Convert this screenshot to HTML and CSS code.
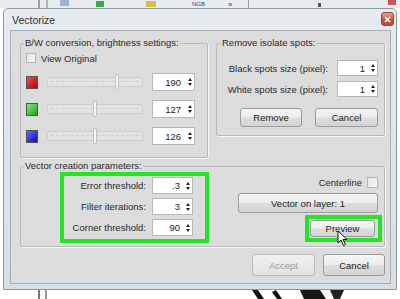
FILE: index.html
```html
<!DOCTYPE html>
<html lang="en">
<head>
  <meta charset="UTF-8" />
  <title>Vectorize</title>
  <link rel="stylesheet" href="styles.css">
</head>
<body>

<div class="desk">
  <svg class="app-top" width="400" height="8" viewBox="0 0 400 8">
    <rect width="400" height="8" fill="#e9ecef"/>
    <rect x="38" y="0" width="2" height="8" fill="#9aa0a6"/>
    <rect x="46" y="0" width="2" height="8" fill="#b0b5ba"/>
    <rect x="60" y="0" width="9" height="6" fill="#9fb4cc"/>
    <rect x="96" y="1" width="8" height="6" fill="#3ca848"/>
    <rect x="146" y="1" width="10" height="6" fill="#d8c040"/>
    <text x="192" y="6" font-size="6" font-family="Liberation Sans, sans-serif" fill="#2a3bb0">NGB</text>
    <text x="228" y="7" font-size="8" font-family="Liberation Sans, sans-serif" fill="#333">»</text>
    <rect x="248" y="0" width="1" height="8" fill="#9aa0a6"/>
    <rect x="318" y="3" width="3" height="4" fill="#556"/>
    <rect x="388" y="0" width="8" height="5" fill="#c65a5a"/>
  </svg>

  <div class="window">
    <div class="titlebar">
      <span class="title">Vectorize</span>
      <span class="close">
        <svg width="7" height="7" viewBox="0 0 7 7"><path d="M1 1 L6 6 M6 1 L1 6" stroke="#fff" stroke-width="1.6"/></svg>
      </span>
    </div>

    <div class="client">
      <div class="top-row">
        <fieldset class="group bw">
          <legend>B/W conversion, brightness settings:</legend>
          <label class="check"><span class="box"></span>View Original</label>

          <div class="channel">
            <span class="swatch red"></span>
            <div class="slider"><span class="thumb" style="left:67px"></span></div>
            <div class="spin"><span class="val">190</span><span class="arrows"></span></div>
          </div>
          <div class="channel">
            <span class="swatch green"></span>
            <div class="slider"><span class="thumb" style="left:45px"></span></div>
            <div class="spin"><span class="val">127</span><span class="arrows"></span></div>
          </div>
          <div class="channel">
            <span class="swatch blue"></span>
            <div class="slider"><span class="thumb" style="left:45px"></span></div>
            <div class="spin"><span class="val">126</span><span class="arrows"></span></div>
          </div>
        </fieldset>

        <fieldset class="group spots">
          <legend>Remove isolate spots:</legend>
          <div class="field">
            <span>Black spots size (pixel):</span>
            <div class="spin small"><span class="val">1</span><span class="arrows"></span></div>
          </div>
          <div class="field">
            <span>White spots size (pixel):</span>
            <div class="spin small"><span class="val">1</span><span class="arrows"></span></div>
          </div>
          <div class="spot-buttons">
            <button class="btn remove">Remove</button>
            <button class="btn cancel-small">Cancel</button>
          </div>
        </fieldset>
      </div>

      <fieldset class="group vector">
        <legend>Vector creation parameters:</legend>
        <div class="vector-body">
          <div class="mark params">
            <div class="param">
              <span>Error threshold:</span>
              <div class="spin small"><span class="val">.3</span><span class="arrows"></span></div>
            </div>
            <div class="param">
              <span>Filter iterations:</span>
              <div class="spin small"><span class="val">3</span><span class="arrows"></span></div>
            </div>
            <div class="param">
              <span>Corner threshold:</span>
              <div class="spin small"><span class="val">90</span><span class="arrows"></span></div>
            </div>
          </div>

          <div class="vec-side">
            <label class="check centerline">Centerline<span class="box"></span></label>
            <button class="btn layer">Vector on layer: 1</button>
            <div class="mark preview-mark">
              <button class="btn preview">Preview</button>
            </div>
          </div>
        </div>
      </fieldset>

      <div class="actions">
        <button class="btn accept" disabled>Accept</button>
        <button class="btn cancel">Cancel</button>
      </div>
    </div>
  </div>

  <svg class="app-bottom" width="400" height="9" viewBox="0 0 400 9">
    <rect width="400" height="9" fill="#fdfdfd"/>
    <rect x="38" y="0" width="2" height="9" fill="#777"/>
    <rect x="45" y="0" width="2" height="9" fill="#999"/>
    <path d="M252 0 L258 0 L264 9 L258 9 Z" fill="#111"/>
    <path d="M272 2 L276 0 L282 9 L277 9 Z" fill="#111"/>
    <path d="M300 0 L320 0 L326 9 L304 9 Z" fill="#161616"/>
    <path d="M330 0 L344 0 L340 9 L334 9 Z" fill="#222"/>
  </svg>

  <svg class="cursor" width="12" height="17" viewBox="0 0 12 17">
    <path d="M1 1 L1 13 L4 10 L6.5 15.5 L8.5 14.5 L6 9.5 L10 9.5 Z" fill="#fff" stroke="#111" stroke-width="1"/>
  </svg>
</div>

</body>
</html>
```

FILE: styles.css
```css
body {
  margin: 0;
  font-family: "Liberation Sans", Arial, sans-serif;
  font-size: 9.5px;
  color: #2b2b2b;
}
.desk {
  width: 400px;
  height: 299px;
  background: #fff;
  position: relative;
  overflow: hidden;
}
.app-top,
.app-bottom {
  display: block;
}
.window {
  margin: 0 3px;
  height: 282px;
  box-sizing: border-box;
  border: 1px solid #8c99a6;
  border-radius: 5px 5px 0 0;
  background: linear-gradient(#e6ebf0, #d6dee6);
  display: flex;
  flex-direction: column;
}
.titlebar {
  height: 21px;
  display: flex;
  align-items: center;
  padding: 0 2px 0 8px;
}
.title {
  font-size: 10.5px;
  color: #333;
}
.close {
  margin-left: auto;
  align-self: flex-start;
  margin-top: 3px;
  width: 13px;
  height: 14px;
  box-sizing: border-box;
  border: 1px solid #93443a;
  border-radius: 3px;
  background: linear-gradient(#e9a596, #c8543f 55%, #c04a38);
  display: flex;
  align-items: center;
  justify-content: center;
}
.close svg {
  display: block;
}
.client {
  flex: 1;
  margin: 0 5px 5px 6px;
  border: 1px solid #a5afba;
  background: #dcdcdc;
  padding: 6px 5px 6px 9px;
  display: flex;
  flex-direction: column;
}
.top-row {
  display: flex;
  justify-content: space-between;
  align-items: flex-start;
}
.group {
  margin: 0;
  box-sizing: border-box;
  border: 1px solid #b9b9b9;
  border-radius: 2px;
  box-shadow: 1px 1px 0 #f6f6f6;
  min-width: 0;
}
.group legend {
  padding: 0 1px;
  margin-left: -2px;
  line-height: 12px;
  color: #2b2b2b;
}
.bw {
  width: 188px;
  padding: 3px 11px 12px 5px;
}
.check {
  display: flex;
  align-items: center;
  height: 12px;
  gap: 5px;
}
.box {
  width: 10px;
  height: 10px;
  box-sizing: border-box;
  border: 1px solid #b6b6b6;
  background: linear-gradient(135deg, #e6e6e6, #f8f8f8);
}
.channel {
  display: flex;
  align-items: center;
  height: 18px;
  margin-top: 9px;
}
.swatch {
  width: 12px;
  height: 13px;
  box-sizing: border-box;
  border: 1px solid #555;
}
.swatch.red {
  background: linear-gradient(135deg, #f04a4a, #b00808);
}
.swatch.green {
  background: linear-gradient(135deg, #7af07a, #1ea01e);
}
.swatch.blue {
  background: linear-gradient(135deg, #6a6aff, #0a0ac0);
}
.slider {
  position: relative;
  margin-left: 9px;
  width: 96px;
  height: 10px;
  box-sizing: border-box;
  border: 1px solid #cdcdcd;
  border-radius: 2px;
  background: #e3e3e3;
}
.slider::before {
  content: "";
  position: absolute;
  left: 3px;
  right: 3px;
  top: 3px;
  border-top: 1px dashed #cfcfcf;
}
.thumb {
  position: absolute;
  top: -4px;
  width: 4px;
  height: 16px;
  box-sizing: border-box;
  border: 1px solid #c2c2c2;
  border-radius: 1px;
  background: #f3f3f3;
}
.spin {
  margin-left: 9px;
  width: 43px;
  height: 18px;
  box-sizing: border-box;
  border: 1px solid #b7b7b7;
  background: #fff;
  display: flex;
  align-items: center;
}
.spin .val {
  flex: 1;
  text-align: right;
  padding-right: 4px;
  color: #222;
}
.spin .arrows {
  width: 9px;
  height: 100%;
  display: flex;
  flex-direction: column;
  justify-content: center;
  align-items: center;
  gap: 2px;
}
.spin .arrows::before,
.spin .arrows::after {
  content: "";
  width: 0;
  height: 0;
  border-left: 2.5px solid transparent;
  border-right: 2.5px solid transparent;
}
.spin .arrows::before {
  border-bottom: 3px solid #222;
}
.spin .arrows::after {
  border-top: 3px solid #222;
}
.spin.small {
  margin-left: 0;
  width: 41px;
  height: 16px;
}
.spin.small .val {
  padding-right: 3px;
}
.spots {
  width: 169px;
  padding: 11px 6px 8px 6px;
}
.field {
  display: flex;
  justify-content: flex-end;
  align-items: center;
  gap: 9px;
  height: 16px;
}
.field + .field {
  margin-top: 5px;
}
.spot-buttons {
  display: flex;
  justify-content: flex-end;
  gap: 13px;
  margin-top: 11px;
}
.btn {
  font-family: inherit;
  font-size: 9.5px;
  color: #222;
  padding: 0;
  box-sizing: border-box;
  border: 1px solid #9b9b9b;
  border-radius: 3px;
  background: linear-gradient(#f5f5f5, #ececec 48%, #dedede 52%, #d3d3d3);
}
.remove {
  width: 62px;
  height: 19px;
}
.cancel-small {
  width: 63px;
  height: 19px;
}
.vector {
  margin-top: 2px;
  padding: 0 2px 3px 5px;
}
.vector-body {
  display: flex;
  align-items: flex-start;
}
.mark {
  border: 4px solid #24e424;
}
.params {
  margin-left: 34px;
  width: 149px;
  box-sizing: border-box;
  padding: 1px 12px 3px 0;
  display: flex;
  flex-direction: column;
  gap: 4px;
}
.param {
  display: flex;
  justify-content: flex-end;
  align-items: center;
  gap: 6px;
  height: 17px;
}
.param .spin.small {
  height: 17px;
}
.vec-side {
  margin-left: auto;
  display: flex;
  flex-direction: column;
  align-items: flex-end;
}
.centerline {
  margin-top: 5px;
  margin-right: 4px;
  height: 11px;
  gap: 5px;
}
.centerline .box {
  width: 11px;
  height: 11px;
}
.layer {
  margin-top: 5px;
  margin-right: 4px;
  width: 140px;
  height: 20px;
}
.preview-mark {
  margin-top: 2px;
  width: 77px;
  height: 27px;
  box-sizing: border-box;
  padding: 1px 2px 1px 1px;
}
.preview {
  width: 65px;
  height: 17px;
  display: block;
}
.actions {
  margin-top: 7px;
  display: flex;
  justify-content: flex-end;
  gap: 8px;
}
.accept {
  width: 63px;
  height: 22px;
  color: #9c9c9c;
  border-color: #bcbcbc;
  background: linear-gradient(#f0f0f0, #e3e3e3);
}
.cancel {
  width: 62px;
  height: 22px;
}
.cursor {
  position: absolute;
  left: 337px;
  top: 230px;
}
```
